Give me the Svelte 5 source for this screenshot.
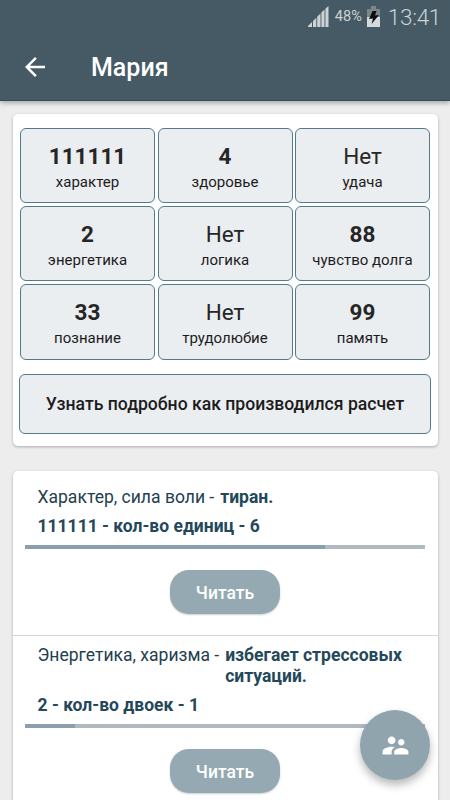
<script lang="ts">
  interface Cell {
    value: string;
    label: string;
  }

  interface Trait {
    name: string;
    result: string[];
    summary: string;
    progress: number;
  }

  const cells: Cell[] = [
    { value: '111111', label: 'характер' },
    { value: '4', label: 'здоровье' },
    { value: 'Нет', label: 'удача' },
    { value: '2', label: 'энергетика' },
    { value: 'Нет', label: 'логика' },
    { value: '88', label: 'чувство долга' },
    { value: '33', label: 'познание' },
    { value: 'Нет', label: 'трудолюбие' },
    { value: '99', label: 'память' },
  ];

  const traits: Trait[] = [
    { name: 'Характер, сила воли -', result: ['тиран.'], summary: '111111 - кол-во единиц - 6', progress: 75 },
    { name: 'Энергетика, харизма -', result: ['избегает стрессовых', 'ситуаций.'], summary: '2 - кол-во двоек - 1', progress: 12.5 },
  ];
</script>

<div class="screen">
  <header>
    <div class="status">
      <svg class="signal" width="21" height="21" viewBox="0 0 21 21">
        <path d="M0 21v-1l4-4v5zM5 21v-6l3.300-3.300V21zM9.200 21V10.800l3.300-3.300V21zM13.400 21V6.600l3.100-3.100V21zM17.400 21V2.800L20.500 0v21z" />
      </svg>
      <span class="percent">48%</span>
      <svg class="battery" width="13" height="21" viewBox="0 0 13 21">
        <path class="empty" d="M4 0h5v3h4v8H0V3h4z" />
        <path class="full" d="M0 11h13v10H0z" />
        <path class="bolt" d="M5.500 5h4L8 9.500l4-.5-7.500 9 1.500-5.500L2 13z" />
      </svg>
      <span class="time">13:41</span>
    </div>
    <div class="toolbar">
      <button class="back" aria-label="Назад">
        <svg width="30" height="30" viewBox="0 0 24 24">
          <path d="M20 11H7.830l5.590-5.590L12 4l-8 8 8 8 1.410-1.410L7.830 13H20v-2z" />
        </svg>
      </button>
      <h1>Мария</h1>
    </div>
  </header>

  <main>
    <section class="card matrix">
      <div class="grid">
        {#each cells as cell}
          <div class="cell">
            <span class="value" class:none={cell.value === 'Нет'}>{cell.value}</span>
            <span class="label">{cell.label}</span>
          </div>
        {/each}
      </div>
      <button class="details">Узнать подробно как производился расчет</button>
    </section>

    <section class="card traits">
      {#each traits as trait}
        <article>
          <div class="line">
            <span class="name">{trait.name}</span>
            <strong>
              {#each trait.result as row}
                <span>{row}</span>
              {/each}
            </strong>
          </div>
          <div class="summary">{trait.summary}</div>
          <div class="progress"><div class="bar" style="width: {trait.progress}%"></div></div>
          <button class="read">Читать</button>
        </article>
      {/each}
    </section>
  </main>

  <button class="fab" aria-label="Совместимость">
    <svg width="31" height="31" viewBox="0 0 24 24">
      <path d="M16.500 12c1.380 0 2.490-1.120 2.490-2.500S17.880 7 16.500 7 14 8.120 14 9.500s1.120 2.500 2.500 2.500zM9 11c1.660 0 2.990-1.340 2.990-3S10.660 5 9 5 6 6.340 6 8s1.340 3 3 3zm7.500 3c-1.830 0-5.500.92-5.500 2.750V19h11v-2.250c0-1.830-3.670-2.750-5.500-2.750zM9 13c-2.330 0-7 1.170-7 3.500V19h7v-2.250c0-.85.33-2.340 2.370-3.470C10.500 13.100 9.660 13 9 13z" />
    </svg>
  </button>
</div>

<style>
  :global(body) {
    margin: 0;
  }

  .screen {
    position: relative;
    width: 450px;
    height: 800px;
    overflow: hidden;
    background: #ededed;
    font-family: Roboto, sans-serif;
  }

  .screen * {
    box-sizing: border-box;
  }

  button {
    margin: 0;
    padding: 0;
    border: 0;
    font-family: inherit;
  }

  svg {
    display: block;
  }

  header {
    position: relative;
    height: 101px;
    background: #455a64;
    border-bottom: 1px solid #2f4f5c;
    box-shadow: 0 2px 5px rgba(0, 0, 0, 0.3);
  }

  .status {
    display: flex;
    align-items: center;
    justify-content: flex-end;
    height: 31px;
    padding: 1px 9px 0 0;
    color: #cbd3d7;
  }

  .signal {
    fill: #cbd3d7;
    margin-right: 6px;
  }

  .percent {
    width: 28px;
    padding-top: 1px;
    font-size: 14.500px;
  }

  .battery {
    margin: 0 8px 0 4px;
  }

  .battery .empty {
    fill: #7a878d;
  }

  .battery .full {
    fill: #d3dadd;
  }

  .battery .bolt {
    fill: #0c0f10;
  }

  .time {
    padding-top: 1px;
    font-size: 22.500px;
    font-weight: 300;
    letter-spacing: -0.300px;
  }

  .toolbar {
    display: flex;
    align-items: center;
    height: 70px;
    padding: 1px 0 0 20px;
  }

  .back {
    background: none;
  }

  .back svg {
    fill: #fff;
  }

  h1 {
    margin: 2px 0 0 41px;
    color: #fff;
    font-size: 25px;
    font-weight: 500;
  }

  main {
    padding: 12.500px;
  }

  .card {
    background: #fff;
    border-radius: 5px;
    box-shadow: 0 1px 3px rgba(0, 0, 0, 0.28);
  }

  .matrix {
    height: 332.500px;
    padding: 14px 6.500px 0;
  }

  .grid {
    display: grid;
    grid-template-columns: repeat(3, 135px);
    grid-auto-rows: 75.500px;
    gap: 2.800px 2.500px;
    padding-left: 1px;
  }

  .cell {
    display: flex;
    flex-direction: column;
    align-items: center;
    padding-top: 14px;
    background: #ebeef1;
    border: 1px solid #54798a;
    border-radius: 6px;
  }

  .value {
    color: #262626;
    font-size: 22.500px;
    font-weight: 700;
    line-height: 27px;
  }

  .value.none {
    font-weight: 400;
  }

  .label {
    padding-top: 1px;
    color: #1c1c1c;
    font-size: 15px;
    line-height: 22px;
  }

  .details {
    width: 412px;
    height: 60px;
    margin-top: 14px;
    padding-top: 1px;
    color: #1c1c1c;
    background: #ebeef1;
    border: 1px solid #54798a;
    border-radius: 6px;
    font-size: 17.600px;
    font-weight: 500;
  }

  .traits {
    margin-top: 25px;
  }

  article {
    display: flex;
    flex-direction: column;
    padding: 15.500px 12.500px 20.500px;
    border-bottom: 1px solid #d6d6d6;
  }

  article + article {
    padding-top: 9.500px;
  }

  .line {
    display: flex;
    gap: 6px;
    padding-left: 12.500px;
    color: #24404e;
    font-size: 17.550px;
    line-height: 20.500px;
  }

  strong {
    font-weight: 700;
    color: #24485a;
  }

  strong span {
    display: block;
  }

  .summary {
    margin-top: 9px;
    padding-left: 12.500px;
    color: #24485a;
    font-size: 17.500px;
    font-weight: 700;
    line-height: 21px;
  }

  .progress {
    height: 4px;
    margin-top: 8px;
    background: #b0b9bf;
  }

  .bar {
    height: 4px;
    background: #8a9fab;
  }

  .read {
    align-self: center;
    width: 110px;
    height: 44px;
    margin-top: 21px;
    padding-top: 1px;
    color: #fff;
    background: #95a9b3;
    border-radius: 19px;
    box-shadow: 0 1px 2px rgba(0, 0, 0, 0.2);
    font-size: 17.500px;
    font-weight: 500;
  }

  .fab {
    position: absolute;
    right: 20px;
    bottom: 20px;
    display: flex;
    align-items: center;
    justify-content: center;
    width: 70px;
    height: 70px;
    background: #90a4ae;
    border-radius: 50%;
    box-shadow: 0 5px 9px rgba(0, 0, 0, 0.28);
  }

  .fab svg {
    fill: #fff;
  }
</style>
